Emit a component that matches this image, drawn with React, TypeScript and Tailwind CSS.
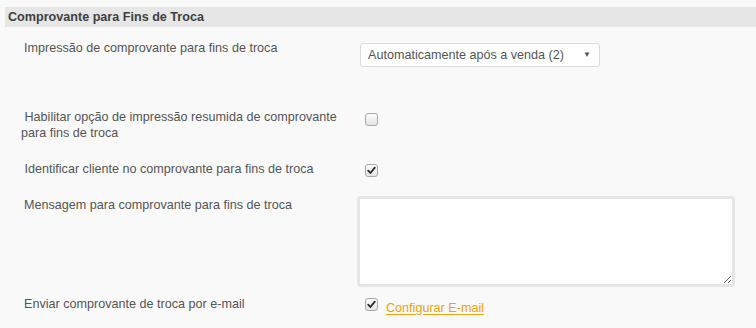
import React from 'react';

const font = { fontFamily: '"Liberation Sans", Arial, sans-serif' };

const Check = ({ checked }: { checked?: boolean }) => (
  <span className="flex h-[13px] w-[13px] items-center justify-center rounded-[3px] border border-[#a9a9a9] bg-gradient-to-b from-[#fcfcfc] to-[#e4e4e4]">
    {checked && (
      <svg width="9" height="9" viewBox="0 0 9 9">
        <path d="M1.2 4.6 L3.4 7 L7.8 1.6" fill="none" stroke="#2b2b2b" strokeWidth="1.8" strokeLinecap="round" strokeLinejoin="round" />
      </svg>
    )}
  </span>
);

export default function App() {
  return (
    <div className="h-[328px] w-[756px] overflow-hidden bg-[#f9f9f9] text-[12.6px] text-[#555]" style={font}>
      <div className="ml-[5px] mt-[7px] h-[20px] bg-[#e6e6e6] px-[3px] text-[12.6px] font-bold leading-[20px] text-[#3f3f3f]">
        Comprovante para Fins de Troca
      </div>

      {/* Impressão */}
      <div className="mt-[13px] flex items-start">
        <div className="w-[360px] pl-[24px] leading-[16px]">Impressão de comprovante para fins de troca</div>
        <div className="mt-[3px] flex h-[24px] w-[240px] items-center justify-between rounded-[3px] border border-[#dcdcdc] bg-white pl-[7px] pr-[8px]">
          <span>Automaticamente após a venda (2)</span>
          <span className="text-[8px] text-[#555]">▼</span>
        </div>
      </div>

      {/* Habilitar */}
      <div className="mt-[42px] flex items-start">
        <div className="w-[360px] pl-[21px] leading-[16px]">
          &nbsp;Habilitar opção de impressão resumida de comprovante
          <br />
          para fins de troca
        </div>
        <div className="ml-[5px] mt-[4px]">
          <Check />
        </div>
      </div>

      {/* Identificar */}
      <div className="mt-[20px] flex items-start">
        <div className="w-[360px] pl-[21px] leading-[16px]">&nbsp;Identificar cliente no comprovante para fins de troca</div>
        <div className="ml-[5px] mt-[3px]">
          <Check checked />
        </div>
      </div>

      {/* Mensagem */}
      <div className="mt-[19px] flex items-start">
        <div className="w-[357px] pl-[24px] pt-[1px] leading-[16px]">Mensagem para comprovante para fins de troca</div>
        <textarea className="h-[91px] w-[378px] rounded-[4px] border-[3px] border-[#e6e6e6] bg-white outline-none" />
      </div>

      {/* Enviar */}
      <div className="mt-[9px] flex items-start">
        <div className="w-[360px] pl-[24px] leading-[16px]">Enviar comprovante de troca por e-mail</div>
        <div className="ml-[5px] mt-[2px]">
          <Check checked />
        </div>
        <a href="#" className="ml-[8px] mt-[4px] leading-[16px] text-[#f0a30a] underline underline-offset-2">
          Configurar E-mail
        </a>
      </div>
    </div>
  );
}
